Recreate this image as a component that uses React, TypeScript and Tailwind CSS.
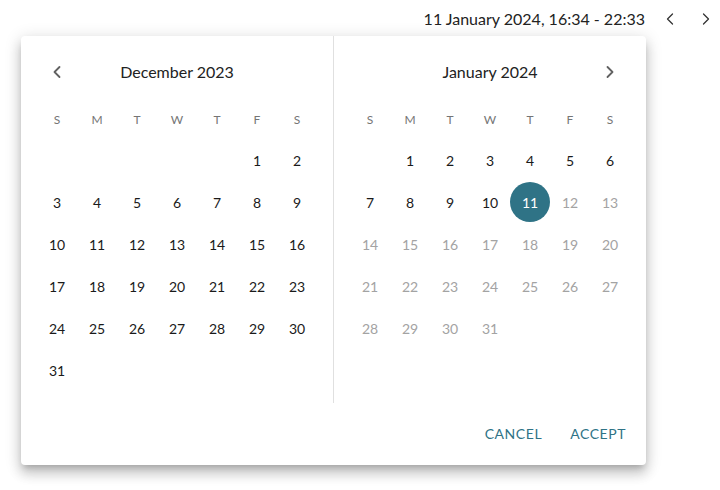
import { ChevronLeft, ChevronRight } from "lucide-react";

const weekdays = ["S", "M", "T", "W", "T", "F", "S"];

type Cell = { day: number; muted?: boolean; selected?: boolean } | null;

function buildMonth(offset: number, length: number, lastEnabled: number, selected?: number): Cell[] {
  const cells: Cell[] = [];
  for (let i = 0; i < offset; i++) cells.push(null);
  for (let d = 1; d <= length; d++) {
    cells.push({ day: d, muted: d > lastEnabled, selected: d === selected });
  }
  while (cells.length < 42) cells.push(null);
  return cells;
}

function MonthPanel({
  title,
  cells,
  side,
}: {
  title: string;
  cells: Cell[];
  side: "left" | "right";
}) {
  return (
    <div className="w-[312px] px-4 pt-4 pb-3">
      <div className="flex h-10 items-center">
        <div className="flex w-10 justify-center">
          {side === "left" && <ChevronLeft className="h-5 w-5 text-[#616161]" strokeWidth={2.2} />}
        </div>
        <div className="flex-1 text-center text-[16px] text-[#222]">{title}</div>
        <div className="flex w-10 justify-center">
          {side === "right" && <ChevronRight className="h-5 w-5 text-[#616161]" strokeWidth={2.2} />}
        </div>
      </div>
      <div className="mt-2 grid h-[39px] grid-cols-7 items-center">
        {weekdays.map((w, i) => (
          <div key={i} className="text-center text-[12px] text-[#757575]">
            {w}
          </div>
        ))}
      </div>
      <div className="grid grid-cols-7">
        {cells.map((c, i) => (
          <div key={i} className="flex h-[42px] items-center justify-center">
            {c &&
              (c.selected ? (
                <div className="flex h-10 w-10 items-center justify-center rounded-full bg-[#2f7386] text-[14px] text-white">
                  {c.day}
                </div>
              ) : (
                <span className={`text-[14px] ${c.muted ? "text-[#a3a3a3]" : "text-[#1a1a1a]"}`}>{c.day}</span>
              ))}
          </div>
        ))}
      </div>
    </div>
  );
}

export default function App() {
  const december = buildMonth(5, 31, 31);
  const january = buildMonth(1, 31, 11, 11);

  return (
    <div
      className="min-h-screen bg-white"
      style={{ fontFamily: "Lato, 'Open Sans', sans-serif" }}
    >
      <div className="flex h-[36px] items-center justify-end pt-[10px] pb-[8px]">
        <span className="text-[16px] text-[#222]">11 January 2024, 16:34 - 22:33</span>
        <div className="ml-[11px] flex gap-2">
          <div className="flex w-7 justify-center">
            <ChevronLeft className="h-5 w-5 text-[#333]" strokeWidth={1.5} />
          </div>
          <div className="flex w-7 justify-center">
            <ChevronRight className="h-5 w-5 text-[#333]" strokeWidth={1.5} />
          </div>
        </div>
      </div>
      <div className="ml-[21px] w-[625px] rounded-[4px] bg-white shadow-[0_5px_6px_-3px_rgba(0,0,0,0.2),0_9px_12px_1px_rgba(0,0,0,0.14),0_3px_16px_2px_rgba(0,0,0,0.12)]">
        <div className="flex">
          <MonthPanel title="December 2023" cells={december} side="left" />
          <div className="w-px bg-[#e0e0e0]" />
          <MonthPanel title="January 2024" cells={january} side="right" />
        </div>
        <div className="flex justify-end gap-3 pl-5 pr-3 pt-3 pb-[14px]">
          <button className="h-9 px-2 text-[14px] tracking-[0.04em] text-[#2f7386]">CANCEL</button>
          <button className="h-9 px-2 text-[14px] tracking-[0.04em] text-[#2f7386]">ACCEPT</button>
        </div>
      </div>
    </div>
  );
}
